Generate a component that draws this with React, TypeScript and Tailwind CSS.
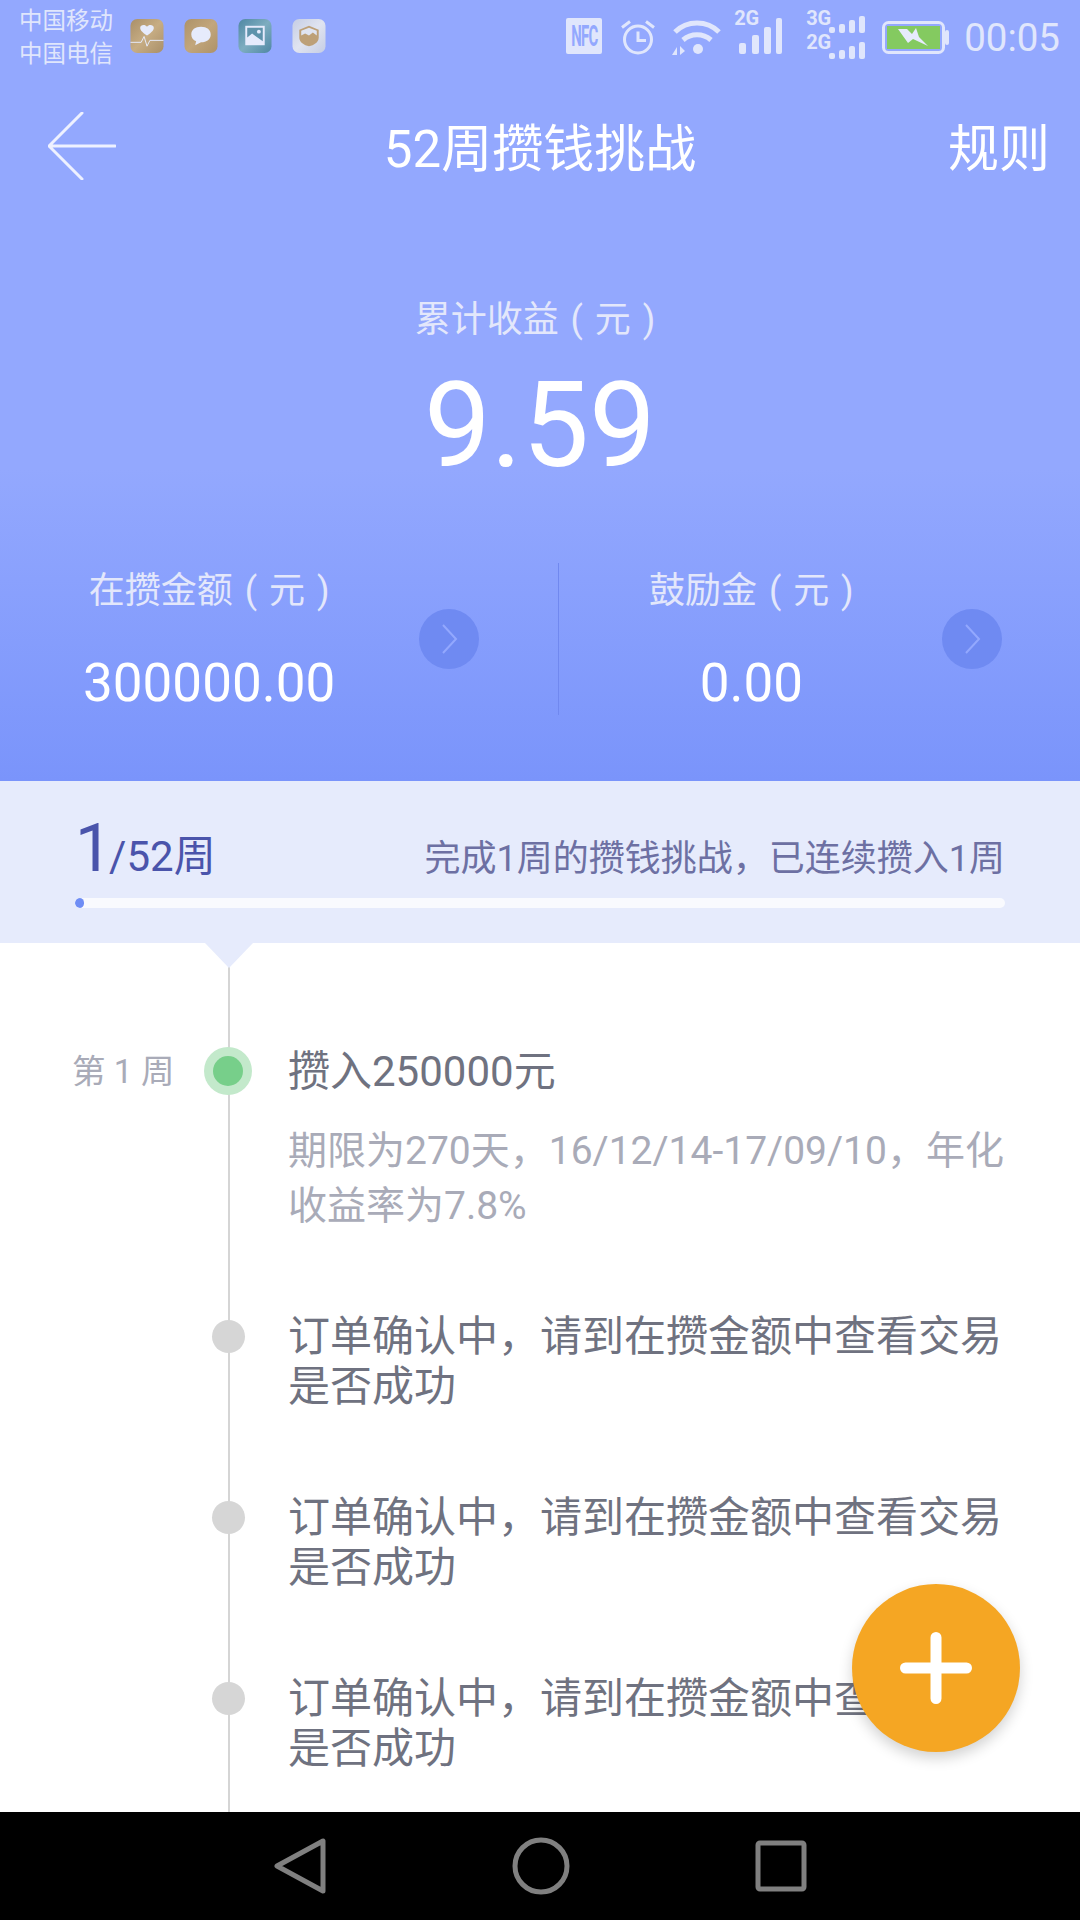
const rows = [1, 2, 3]

function MetalIcon({ from, to, children }: { from: string; to: string; children: React.ReactNode }) {
  const id = `metal-${from.slice(1)}`
  return (
    <svg width="34" height="34" viewBox="0 0 34 35">
      <defs>
        <linearGradient id={id} x1="0" y1="0" x2="1" y2="1">
          <stop offset="0" stopColor={from} />
          <stop offset="0.5" stopColor={to} />
          <stop offset="1" stopColor={from} />
        </linearGradient>
      </defs>
      <rect width="34" height="35" rx="7" fill={`url(#${id})`} />
      {children}
    </svg>
  )
}

function SignalDots() {
  return (
    <svg width="36" height="17" viewBox="0 0 36 17" fill="#e0e6fc">
      <rect x="0" y="11" width="6" height="6" rx="2" />
      <rect x="10" y="8" width="6" height="9" rx="2" />
      <rect x="20" y="4" width="6" height="13" rx="2" />
      <rect x="30" y="0" width="6" height="17" rx="2" />
    </svg>
  )
}

function StatusBar() {
  return (
    <div className="flex h-[75px] items-start pl-[19px] text-[#e0e6fc]">
      <div className="mt-[5px] w-[95px] text-[23.5px] leading-[33px] whitespace-nowrap">
        <div>中国移动</div>
        <div>中国电信</div>
      </div>
      <div className="mt-[19px] ml-[16px] flex gap-[20px]">
        <MetalIcon from="#a98f68" to="#c7ad84">
          <path d="M17 17c-6-4-7-6-7-8 0-3 5-4 7-1 2-3 7-2 7 1 0 2-1 4-7 8z" fill="#e6ebfc" />
          <path d="M0 24h11l3-6 3 10 3-6h14" fill="none" stroke="#e6ebfc" strokeWidth="1" />
        </MetalIcon>
        <MetalIcon from="#ad9268" to="#c2a67c">
          <path d="M17 8c6 0 10 3 10 8s-4 8-10 8l-6 3 1-4c-3-1-5-4-5-7 0-5 4-8 10-8z" fill="#e6ebfc" />
        </MetalIcon>
        <MetalIcon from="#4f87a3" to="#7eadc0">
          <rect x="7" y="7" width="20" height="20" fill="#e6ebfc" />
          <path d="M9 9h16v14L14 15l-5 4z" fill="#5f93ab" />
          <circle cx="21" cy="13" r="2" fill="#e6ebfc" />
        </MetalIcon>
        <MetalIcon from="#c5cde4" to="#e0e4f0">
          <path d="M17 7l10 4v8c0 5-5 8-10 9-5-1-10-4-10-9v-8z" fill="#bda078" />
          <path d="M9 12l8-3 8 3v5l-4-3-4 3-4-2-4 2z" fill="#dfe4f2" />
        </MetalIcon>
      </div>

      <div className="mt-[18px] ml-auto flex items-start pr-[20px]">
        <div className="flex h-[36px] w-[36px] items-center justify-center rounded-[2px] bg-[#e0e6fc]">
          <span className="inline-block scale-x-[0.62] scale-y-[1.2] text-[24px] leading-none font-bold tracking-[-1px] text-[#93a8fe]">NFC</span>
        </div>
        <svg className="ml-[18px]" width="36" height="37" viewBox="0 0 36 36" fill="none" stroke="#e0e6fc">
          <circle cx="18" cy="21" r="13.500" strokeWidth="3" />
          <path d="M18 13v9h8" strokeWidth="3" />
          <path d="M2 9l8-6M34 9l-8-6" strokeWidth="3" />
        </svg>
        <svg className="ml-[13px]" width="54" height="38" viewBox="0 0 54 38" fill="none" stroke="#e0e6fc" strokeWidth="5">
          <path d="M6 14C18 2 38 2 50 14" />
          <path d="M14 22c8-7 20-7 28 0" />
          <circle cx="29" cy="31" r="5" fill="#e0e6fc" stroke="none" />
          <path d="M3 37l5-8v8H3zM11 28l5 5-5 4z" fill="#e0e6fc" stroke="none" />
        </svg>
        <div className="relative ml-[11px] h-[36px] w-[48px]">
          <span className="absolute top-[-12px] left-0 text-[20px] leading-[24px] font-bold">2G</span>
          <svg className="absolute bottom-0 left-[5px]" width="43" height="36" viewBox="0 0 43 36" fill="#e0e6fc">
            <rect x="0" y="25" width="7" height="11" rx="2" />
            <rect x="13" y="17" width="7" height="19" rx="2" />
            <rect x="25" y="9" width="7" height="27" rx="2" />
            <rect x="37" y="0" width="6" height="36" rx="2" />
          </svg>
        </div>
        <div className="relative ml-[24px] h-[42px] w-[59px]">
          <span className="absolute top-[-12px] left-0 text-[20px] leading-[24px] font-bold">3G</span>
          <span className="absolute top-[12px] left-0 text-[20px] leading-[24px] font-bold">2G</span>
          <div className="absolute top-[-2px] right-0 leading-none"><SignalDots /></div>
          <div className="absolute top-[24px] right-0 leading-none"><SignalDots /></div>
        </div>
        <svg className="mt-[3px] ml-[17px]" width="67" height="33" viewBox="0 0 67 33">
          <rect x="1.500" y="1.500" width="60" height="30" rx="5" fill="none" stroke="#e0e6fc" strokeWidth="3" />
          <rect x="5" y="5" width="53" height="23" fill="#84ca60" />
          <rect x="63" y="9" width="4" height="15" rx="2" fill="#e0e6fc" />
          <path d="M16 8h9l5 5 4-6 3 9 9 9-15-7-5 4z" fill="#e6ebfc" />
        </svg>
        <span className="ml-[15px] text-[38.5px] leading-[40px]">00:05</span>
      </div>
    </div>
  )
}

function StatCol({ label, value, className }: { label: string; value: string; className: string }) {
  return (
    <div className={`flex items-center pt-[3px] ${className}`}>
      <div className="text-center">
        <div className="text-[36px] leading-[50px] [word-spacing:3px] text-[#e3e7fb]">{label}</div>
        <div className="mt-[35px] text-[53px] leading-[64px] text-white">{value}</div>
      </div>
    </div>
  )
}

function ArrowButton() {
  return (
    <div className="flex h-[60px] w-[60px] items-center justify-center rounded-full bg-[#6f8af2]">
      <svg width="20" height="30" viewBox="0 0 20 30" fill="none" stroke="#93a8fe" strokeWidth="2">
        <path d="M4 1l13 14L4 29" />
      </svg>
    </div>
  )
}

function Header() {
  return (
    <div className="h-[781px] bg-gradient-to-b from-[#93a8fe] from-[60%] to-[#7a94fb]">
      <StatusBar />
      <div className="grid h-[146px] grid-cols-[1fr_auto_1fr] items-center px-[48px] pt-[3px]">
        <svg className="mb-[7px]" width="68" height="68" viewBox="0 0 68 68" fill="none" stroke="#eef1ff" strokeWidth="3" strokeLinecap="round" strokeLinejoin="round">
          <path d="M34 1L1 34l33 33M1 34h66" />
        </svg>
        <div className="text-[51px] leading-[70px] text-white">52周攒钱挑战</div>
        <div className="mr-[-18px] text-right text-[51px] leading-[70px] text-white">规则</div>
      </div>
      <div className="mt-[74px] pr-[10px] text-center text-[36px] leading-[50px] [word-spacing:3px] text-[#e3e7fb]">累计收益 ( 元 )</div>
      <div className="mt-[16px] text-center text-[119px] leading-[130px] text-white">9.59</div>
      <div className="mt-[72px] flex h-[152px]">
        <div className="flex w-[558px] items-center pr-[79px] pl-[83px]">
          <StatCol label="在攒金额 ( 元 )" value="300000.00" className="flex-1" />
          <ArrowButton />
        </div>
        <div className="h-[152px] w-px bg-[#7088ef]" />
        <div className="flex flex-1 items-center pr-[78px] pl-[90px]">
          <StatCol label="鼓励金 ( 元 )" value="0.00" className="flex-1" />
          <ArrowButton />
        </div>
      </div>
    </div>
  )
}

function Progress() {
  return (
    <div className="h-[162px] bg-[#e6ebfc] px-[75px] pt-[26px]">
      <div className="flex h-[84px] items-end justify-between">
        <div className="flex items-baseline text-[#4a54ab]">
          <span className="text-[66px] leading-[84px]">1</span>
          <span className="ml-[-3px] text-[42px]">/52周</span>
        </div>
        <div className="pb-[7px] text-[36px] leading-[50px] text-[#6d70a3]">完成1周的攒钱挑战，已连续攒入1周</div>
      </div>
      <div className="mt-[7px] h-[10px] w-[930px] overflow-hidden rounded-full bg-[#f9fafe]">
        <div className="h-full w-[9px] rounded-full bg-[#6f8df5]" />
      </div>
    </div>
  )
}

function Timeline() {
  return (
    <div className="relative flex-1 overflow-hidden bg-white pt-[104px]">
      <div className="absolute top-[20px] bottom-0 left-[228px] w-[2px] bg-[#d5d5d5]" />
      <div className="absolute top-0 left-[205px] h-[25px] w-[48px] bg-[#e6ebfc] [clip-path:polygon(0_0,100%_0,50%_100%)]" />

      <div className="relative flex">
        <div className="w-[204px] pl-[72px] text-[33.5px] leading-[50px] whitespace-nowrap text-[#a9abb8]">第 1 周</div>
        <div className="flex h-[48px] w-[48px] items-center justify-center rounded-full bg-[#c3e9cb]">
          <div className="h-[30px] w-[30px] rounded-full bg-[#77cf8a]" />
        </div>
        <div className="ml-[36px] w-[740px]">
          <div className="text-[42px] leading-[50px] text-[#6f7280]">攒入250000元</div>
          <div className="mt-[27px] text-[39px] leading-[55px] text-[#a9abb8]">
            期限为270天，16/12/14-17/09/10，年化
            <br />
            收益率为7.8%
          </div>
        </div>
      </div>

      {rows.map((row, i) => (
        <div key={row} className={`relative flex ${i === 0 ? 'mt-[77px]' : 'mt-[80px]'}`}>
          <div className="h-[50px] w-[204px]" />
          <div className="flex h-[50px] w-[48px] items-center justify-center">
            <div className="h-[33px] w-[33px] rounded-full bg-[#d6d6d6]" />
          </div>
          <div className="mt-px ml-[36px] w-[740px] text-[42px] leading-[50px] text-[#6f7280]">
            订单确认中，请到在攒金额中查看交易
            <br />
            是否成功
          </div>
        </div>
      ))}
    </div>
  )
}

function NavBar() {
  return (
    <div className="flex h-[108px] items-center justify-between bg-black pr-[273px] pl-[274px]">
      <svg width="52" height="56" viewBox="0 0 52 56" fill="none" stroke="#808080" strokeWidth="5" strokeLinejoin="round">
        <path d="M3 28L49 3v50z" />
      </svg>
      <svg width="58" height="58" viewBox="0 0 58 58" fill="none" stroke="#808080" strokeWidth="5">
        <circle cx="29" cy="29" r="26" />
      </svg>
      <svg width="52" height="52" viewBox="0 0 52 52" fill="none" stroke="#808080" strokeWidth="5" strokeLinejoin="round">
        <rect x="3" y="3" width="46" height="46" rx="2" />
      </svg>
    </div>
  )
}

export default function App() {
  return (
    <div className="relative flex h-[1920px] w-[1080px] flex-col overflow-hidden bg-white font-[Roboto,'Noto_Sans_CJK_SC',sans-serif]">
      <Header />
      <Progress />
      <Timeline />
      <NavBar />
      <button className="absolute top-[1584px] left-[852px] flex h-[168px] w-[168px] items-center justify-center rounded-full bg-[#f5a623] shadow-[0_6px_14px_rgba(0,0,0,0.18)]">
        <svg width="72" height="72" viewBox="0 0 72 72" stroke="#fff" strokeWidth="11" strokeLinecap="round">
          <path d="M36 5.500v61M5.500 36h61" />
        </svg>
      </button>
    </div>
  )
}
